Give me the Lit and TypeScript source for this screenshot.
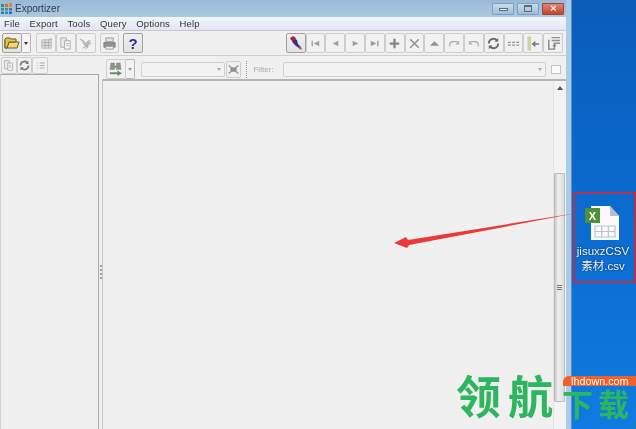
import { LitElement, html, css, svg } from "lit";
import { customElement } from "lit/decorators.js";

const I = (content: unknown, size = 16) => html`<svg width=${size} height=${size} viewBox="0 0 16 16">${content}</svg>`;

const icons: Record<string, unknown> = {
  open: svg`<path d="M1 4 V13 H13 L15 7 H5 L3 13" fill="#f2d77a" stroke="#6b5a1e"/><path d="M1 4 L2 3 H6 L7 4 H12 V7 H5 L3 13 H1z" fill="#e7c14e" stroke="#6b5a1e"/>`,
  grid: svg`<path d="M3 4h10v9H3z" fill="#ddd" stroke="#aaa"/><path d="M3 7h10M3 10h10M6.500 4v9M10 4v9" stroke="#999"/><circle cx="12.500" cy="3.500" r="1.500" fill="#b9a98c"/>`,
  copy: svg`<path d="M3 2h6v10H3z" fill="#e8e8e8" stroke="#999"/><path d="M7 5h6v9H7z" fill="#f3f3f3" stroke="#999"/><path d="M8.500 8h3M8.500 10h3" stroke="#aaa"/>`,
  bird: svg`<path d="M2 3l4 2 2 3 3-3 2 0-1 2 2 1-3 1-1 3-3-2-2-4z" fill="#aaa" stroke="#999" stroke-width=".6"/><path d="M5 13l6-3M8 14l3-3" stroke="#b98080" />`,
  print: svg`<path d="M4 2h8v4H4z" fill="#ddd" stroke="#888"/><path d="M2 7h12v5H2z" fill="#777" stroke="#666"/><path d="M4 11h8v3H4z" fill="#eee" stroke="#888"/>`,
  help: svg`<text x="8" y="13.500" text-anchor="middle" font-family="Liberation Sans" font-weight="700" font-size="15" fill="#2a2f9c">?</text>`,
  refresh: svg`<path d="M3 8a5 5 0 0 1 8.500-3.500M13 8a5 5 0 0 1-8.500 3.500" fill="none" stroke="#555" stroke-width="2"/><path d="M13 2v4H9zM3 14v-4h4z" fill="#555"/>`,
  list: svg`<path d="M7 5h6M7 8h6M7 11h6" stroke="#999" stroke-width="1.300"/><path d="M3 5h2M3 8h2M3 11h2" stroke="#bbb"/>`,
  binoc: svg`<path d="M3 1h4v7H2zM9 1h4l1 7H9z" fill="#77776c" stroke="#666" stroke-width=".5"/><path d="M7 4h2v2H7z" fill="#555"/><path d="M2 12h9" stroke="#3f6b48" stroke-width="2"/><path d="M10 9l5 3-5 3z" fill="#3f6b48"/>`,
  cross: svg`<path d="M2 3l12 10M14 3L2 13" stroke="#777" stroke-width="1.500"/><ellipse cx="8" cy="8" rx="4" ry="2.800" fill="#777"/>`,
  post: svg`<path d="M3 4l3-1 3 2 1 4 3 3-1 2-4-3-3-3z" fill="#3b2f8f"/><path d="M2 3l3-2 3 2-2 3-3-1z" fill="#a3253c"/><path d="M9 11l5 2-1 2z" fill="#cf4a72"/>`,
  first: svg`<path d="M4.500 5v6" stroke="#888" stroke-width="1.500"/><path d="M12 5v6L6 8z" fill="#888"/>`,
  prev: svg`<path d="M11 5v6L5 8z" fill="#888"/>`,
  next: svg`<path d="M5 5v6l6-3z" fill="#888"/>`,
  last: svg`<path d="M11.500 5v6" stroke="#888" stroke-width="1.500"/><path d="M4 5v6l6-3z" fill="#888"/>`,
  plus: svg`<path d="M8 3v10M3 8h10" stroke="#666" stroke-width="2.400"/>`,
  del: svg`<path d="M3.500 3.500l9 9M12.500 3.500l-9 9" stroke="#777" stroke-width="1.600"/>`,
  up: svg`<path d="M3 10.500l5-5 5 5z" fill="#777"/>`,
  redo: svg`<path d="M3 11V9a3 3 0 0 1 3-3h4a3 3 0 0 1 2 1" fill="none" stroke="#999" stroke-width="1.300"/><path d="M13 5v4h-4z" fill="#999"/>`,
  undo: svg`<path d="M13 11V9a3 3 0 0 0-3-3H6a3 3 0 0 0-2 1" fill="none" stroke="#999" stroke-width="1.300"/><path d="M3 5v4h4z" fill="#999"/>`,
  refresh2: svg`<path d="M3 8a5 5 0 0 1 8.500-3.500M13 8a5 5 0 0 1-8.500 3.500" fill="none" stroke="#444" stroke-width="2"/><path d="M13 2v4H9zM3 14v-4h4z" fill="#444"/>`,
  cols: svg`<path d="M2 6h3v1.500H2zM6.500 6h3v1.500h-3zM11 6h3v1.500h-3zM2 9h3v1.500H2zM6.500 9h3v1.500h-3zM11 9h3v1.500h-3z" fill="#777"/>`,
  fit: svg`<path d="M2 1h3v14H2z" fill="#cfd08a" stroke="#a6a75c" stroke-width=".5"/><path d="M14 8.500H9" stroke="#555" stroke-width="1.500"/><path d="M10 5v7L6 8.500z" fill="#555"/>`,
  rows: svg`<path d="M6 1h9v1.500H6zM6 4h9v1.500H6zM8 7h7v1.500H8z" fill="#777"/><path d="M3 4v10h6v-4" fill="none" stroke="#666" stroke-width="1.500"/><path d="M6.500 11l2.500-3 2.500 3z" fill="#666"/>`,
};

@customElement("app-root")
export class AppRoot extends LitElement {
  static styles = css`
    :host { display: block; width: 636px; height: 429px; overflow: hidden; }
    * { box-sizing: border-box; }
    .desk { position: relative; width: 636px; height: 429px; overflow: hidden; display: flex; filter: blur(.4px);
      background: linear-gradient(180deg, #0a5cb8 0%, #0a6bd0 50%, #0f7be0 100%); font-family: "Liberation Sans", "Noto Sans CJK SC", sans-serif; }
    .win { width: 571px; height: 429px; flex: none; display: flex; flex-direction: column;
      background: #f0f0f0; border-right: 5px solid #a9cbe6; box-shadow: 1px 0 0 #5b8fc0; }
    .title { height: 17px; flex: none; display: flex; align-items: center; gap: 3px; padding: 0 2px 0 1px;
      background: linear-gradient(180deg, #98b9d8 0%, #adc9e1 100%); color: #2c3e50; font-size: 10px; }
    .spacer { flex: 1; }
    .cap { display: flex; }
    .cap span { width: 22px; height: 12px; display: flex; align-items: center; justify-content: center;
      background: linear-gradient(180deg, #c9dcec, #9fbdd7); border: 1px solid #7f9fbc; margin-left: 3px; border-radius: 1px; }
    .cap .x { background: linear-gradient(180deg, #de8a72, #c4422d); border-color: #9b4636; color: #fff; font-size: 8px; font-weight: 700; }
    .cap i { display: block; }
    .cap .min i { width: 9px; height: 3px; border: 1px solid #5a6b7a; background: #e6eef5; margin-top: 2px; }
    .cap .max i { width: 8px; height: 7px; border: 1px solid #5a6b7a; border-top-width: 2px; }
    .menu { height: 14px; flex: none; display: flex; align-items: center; padding: 0 4px; font-size: 9.500px; color: #333;
      background: linear-gradient(180deg, #f2f5f9, #dfe6f3); border-bottom: 1px solid #c8c8cc; letter-spacing: .15px; gap: 9.600px; }
    .tb1 { height: 25px; flex: none; display: flex; align-items: center; padding: 0 3px 0 2px; border-bottom: 1px solid #d0d0d0; }
    .tb2 { height: 25px; flex: none; display: flex; align-items: center; border-bottom: 2px solid #b4b4b4; padding-top: 3px; }
    .btn { width: 19.800px; height: 20px; flex: none; display: flex; align-items: center; justify-content: center;
      border: 1px solid #cdcdcd; border-radius: 2px; background: #f1f1f1; }
    .btn svg { opacity: .78; }
    .btn.small { width: 15.700px; height: 17px; }
    .btn.on { background: linear-gradient(180deg, #f0f0f0, #e2e2e2); border-color: #a0a0a0; }
    .btn.on svg { opacity: 1; }
    .drop { width: 9px; height: 20px; flex: none; display: flex; align-items: center; justify-content: center; border: 1px solid #b8b8b8; border-left: 0; border-radius: 0 2px 2px 0; background: #f3f3f3; }
    .drop::after { content: ""; border: 2.500px solid transparent; border-top: 3px solid #333; border-bottom: 0; }
    .drop.dim::after { border-top-color: #999; }
    .sep-a { width: 5.500px; flex: none; }
    .sep-b { width: 4px; flex: none; }
    .sep-c { width: 6px; flex: none; }
    .left { width: 99px; flex: none; display: flex; align-items: flex-start; padding-left: 1px; height: 17px; align-self: flex-start; margin-top: -2px; }
    .combo { height: 15px; flex: none; display: flex; align-items: center; justify-content: flex-end; padding-right: 3px; background: #f2f2f2; border: 1px solid #cfcfcf; border-radius: 2px; }
    .combo::after { content: ""; border: 2.500px solid transparent; border-top: 3px solid #aaa; border-bottom: 0; }
    .combo.find { width: 84px; margin-right: 1px; }
    .combo.value { flex: 1; }
    .filter { color: #aaa; font-size: 8px; width: 30px; }
    .grip { width: 0; height: 17px; margin: 0 6px 0 5px; border-left: 1px dotted #999; }
    .check { width: 10px; height: 9px; background: #fbfbfb; border: 1px solid #c4c4c4; margin: 0 5px; flex: none; }
    .gap7 { width: 7px; flex: none; }
    .body { flex: 1; display: flex; min-height: 0; }
    .lp { width: 99px; flex: none; background: #f0f0f0; border: 1px solid #a8a8a8; border-left-color: #d4d4d4; border-bottom: 0; margin-top: -7px; }
    .split { width: 4px; flex: none; display: flex; align-items: center; justify-content: center; padding-top: 38px; margin-top: -2px; background: #f0f0f0;
      border-right: 1px solid #c4c4c4; }
    .split i { display: block; width: 2px; height: 16px; background: repeating-linear-gradient(180deg, #a0a0a0 0 2px, #eee 2px 4px); }
    .mp { flex: 1; display: flex; justify-content: flex-end; background: #f0f0f0; }
    .sb { width: 13px; display: flex; flex-direction: column; align-items: flex-start; background: #f3f3f3; border-left: 1px solid #e4e4e4; }
    .sb .arrow { height: 14px; width: 11px; display: flex; align-items: center; justify-content: center; }
    .sb .arrow::after { content: ""; border: 3px solid transparent; border-bottom: 4px solid #555; border-top: 0; }
    .track { height: 78px; }
    .thumb { flex: 1; width: 11px; margin-bottom: 27px; background: linear-gradient(90deg, #c8c8c8, #efefef 35%, #dcdcdc); border: 1px solid #bcbcbc; border-radius: 1px; display: flex; align-items: center; justify-content: center; }
    .thumb i { display: block; width: 5px; height: 6px; background: repeating-linear-gradient(180deg, #777 0 1px, #e6e6e6 1px 2px); }

    .red { position: absolute; left: 573px; top: 192px; width: 63px; height: 91px; border: 2px solid #b5324e; }
    .file { position: absolute; left: 573px; top: 205px; width: 60px; display: flex; flex-direction: column; align-items: center; }
    .fname { color: #eef2f8; font-size: 11.500px; line-height: 15px; text-align: center; text-shadow: 0 0 2px #123; margin-top: 3px; white-space: nowrap; }
    .over { position: absolute; left: 0; top: 0; pointer-events: none; }
    .wm { position: absolute; left: 456px; top: 367px; display: flex; align-items: flex-end; font-family: "Noto Sans CJK SC", sans-serif; font-weight: 700; color: #2db560; white-space: nowrap; }
    .wm .big { font-size: 45px; line-height: 56px; letter-spacing: 7px; }
    .wm .lil { font-size: 31px; line-height: 30px; letter-spacing: 5px; margin-left: 2px; margin-bottom: 5px; }
    .wmtag { position: absolute; left: 563px; top: 376px; width: 73px; height: 10px; background: #f0602f; border-radius: 6px 0 0 0; color: #fff; font-size: 10.800px; line-height: 10px; padding-left: 8px; white-space: nowrap; }
  `;

  private btn(name: string, cls = "btn") {
    return html`<div class=${cls}>${I(icons[name], cls.includes("small") ? 13 : 15)}</div>`;
  }

  render() {
    return html`<div class="desk">
      <div class="win">
        <div class="title">
          <svg width="11" height="11" viewBox="0 0 11 11"><rect x="0" y="1" width="3" height="3" fill="#3b8f6b"/><rect x="4" y="1" width="3" height="3" fill="#d86a3a"/><rect x="8" y="0" width="3" height="4" fill="#e08a30"/><rect x="0" y="5" width="3" height="2.500" fill="#2f8fae"/><rect x="4" y="5" width="3" height="2.500" fill="#3a9a70"/><rect x="8" y="5" width="3" height="2.500" fill="#3a7fb0"/><rect x="0" y="8.500" width="3" height="2.500" fill="#2f7fae"/><rect x="4" y="8.500" width="3" height="2.500" fill="#2f8fae"/><rect x="8" y="8.500" width="3" height="2.500" fill="#2f6fae"/></svg>
          <span>Exportizer</span>
          <div class="spacer"></div>
          <div class="cap"><span class="min"><i></i></span><span class="max"><i></i></span><span class="x">✕</span></div>
        </div>
        <div class="menu"><span>File</span><span>Export</span><span>Tools</span><span>Query</span><span>Options</span><span>Help</span></div>
        <div class="tb1">
          <div class="btn on">${I(icons.open)}</div><div class="drop"></div>
          <div class="sep-a"></div>
          ${this.btn("grid")}${this.btn("copy")}${this.btn("bird")}
          <div class="sep-b"></div>
          ${this.btn("print")}
          <div class="sep-b"></div>
          <div class="btn on">${I(icons.help)}</div>
          <div class="spacer"></div>
          <div class="btn on">${I(icons.post)}</div>
          ${["first","prev","next","last","plus","del","up","redo","undo","refresh2","cols","fit","rows"].map(n => this.btn(n))}
        </div>
        <div class="tb2">
          <div class="left">${this.btn("copy","btn small")}${this.btn("refresh","btn small")}${this.btn("list","btn small")}</div>
          <div class="gap7"></div>
          ${this.btn("binoc")}<div class="drop dim"></div>
          <div class="sep-c"></div>
          <div class="combo find"></div>
          ${this.btn("cross","btn small")}
          <div class="grip"></div>
          <div class="filter">Filter:</div>
          <div class="combo value"></div>
          <div class="check"></div>
        </div>
        <div class="body">
          <div class="lp"></div>
          <div class="split"><i></i></div>
          <div class="mp"><div class="sb"><div class="arrow"></div><div class="track"></div><div class="thumb"><i></i></div></div></div>
        </div>
      </div>
      <div class="red"></div>
      <div class="file">
        <svg width="36" height="36" viewBox="0 0 36 36">
          <path d="M6 1h19l9 10v24H6z" fill="#fafafa"/><path d="M25 1l9 10h-9z" fill="#b9bdc4"/>
          <path d="M10 21h20v11H10zM10 26.500h20M16.700 21v11M23.300 21v11" fill="none" stroke="#b9c3c9" stroke-width="1.200"/>
          <rect x="0" y="3" width="15" height="15" fill="#4f8f3a"/>
          <text x="7.500" y="14.500" text-anchor="middle" font-family="Liberation Sans" font-size="11" font-weight="700" fill="#fff">X</text>
        </svg>
        <div class="fname">jisuxzCSV<br />素材.csv</div>
      </div>
      <svg class="over" width="636" height="429" viewBox="0 0 636 429">
        <path d="M577 213 L408 240 L406 237 L394 243 L407 248 L409 245 Z" fill="#ea3a3a"/>
      </svg>
      <div class="wm"><span class="big">领航</span><span class="lil">下载</span></div>
      <div class="wmtag">lhdown.com</div>
    </div>`;
  }
}
